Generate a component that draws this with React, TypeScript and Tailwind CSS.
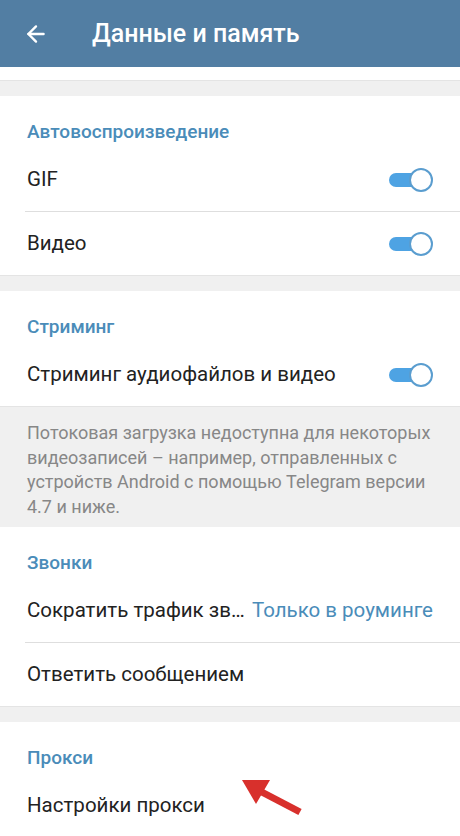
import { ArrowLeft } from 'lucide-react';

const BLUE = 'text-[#4a8cb9]';

function Toggle() {
  return (
    <div className="relative w-[44px] h-[24px] shrink-0">
      <div className="absolute left-0 top-[5px] w-[36px] h-[14px] rounded-full bg-[#4ea3e3]" />
      <div className="absolute right-0 top-0 w-[24px] h-[24px] rounded-full bg-white border-2 border-[#5a9dcf]" />
    </div>
  );
}

function SectionTitle({ children }: { children: string }) {
  return (
    <div className={`h-[52px] pt-[24px] px-[27px] text-[19px] leading-[24px] font-medium ${BLUE}`}>
      {children}
    </div>
  );
}

function Row({ children, divider }: { children: React.ReactNode; divider?: boolean }) {
  return (
    <div>
      <div className="h-[63px] flex items-center px-[27px] text-[20.5px] text-[#222]">{children}</div>
      {divider && <div className="ml-[25px] h-px bg-[#dedede]" />}
    </div>
  );
}

function Gap() {
  return <div className="h-[16px] bg-[#f0f0f0] border-t border-[#e4e4e4]" />;
}

export default function App() {
  return (
    <div
      className="relative w-[460px] h-[836px] overflow-hidden bg-white"
      style={{ fontFamily: 'Roboto, "Noto Sans", sans-serif' }}
    >
      {/* Toolbar */}
      <div className="h-[67px] bg-[#527ea3] flex items-center">
        <ArrowLeft className="ml-[23px] w-[26px] h-[26px] text-white" strokeWidth={2.2} />
        <div className="ml-[43px] text-[25px] font-medium text-white">Данные и память</div>
      </div>

      <div className="h-[13px] bg-white" />
      <Gap />

      {/* Autoplay */}
      <SectionTitle>Автовоспроизведение</SectionTitle>
      <Row divider>
        <span className="flex-1">GIF</span>
        <Toggle />
      </Row>
      <Row>
        <span className="flex-1">Видео</span>
        <Toggle />
      </Row>
      <Gap />

      {/* Streaming */}
      <SectionTitle>Стриминг</SectionTitle>
      <Row>
        <span className="flex-1">Стриминг аудиофайлов и видео</span>
        <Toggle />
      </Row>
      <div className="h-[121px] bg-[#f0f0f0] border-t border-[#e4e4e4] px-[27px] pt-[14px] text-[18px] leading-[24.5px] text-[#878787]">
        Потоковая загрузка недоступна для некоторых видеозаписей – например, отправленных с устройств Android с помощью Telegram версии 4.7 и ниже.
      </div>

      {/* Calls */}
      <SectionTitle>Звонки</SectionTitle>
      <Row divider>
        <span className="flex-1 min-w-0 whitespace-nowrap overflow-hidden">Сократить трафик зв…</span>
        <span className={`ml-[6px] shrink-0 ${BLUE}`}>Только в роуминге</span>
      </Row>
      <Row>
        <span>Ответить сообщением</span>
      </Row>
      <Gap />

      {/* Proxy */}
      <SectionTitle>Прокси</SectionTitle>
      <Row>
        <span>Настройки прокси</span>
      </Row>

      {/* Annotation arrow */}
      <svg className="absolute left-[236px] top-[774px]" width="72" height="46" viewBox="0 0 72 46">
        <line x1="64" y1="38" x2="20" y2="15" stroke="#d8302c" strokeWidth="7" strokeLinecap="butt" />
        <polygon points="6,6 34,6 20,30" fill="#d8302c" />
      </svg>
    </div>
  );
}
